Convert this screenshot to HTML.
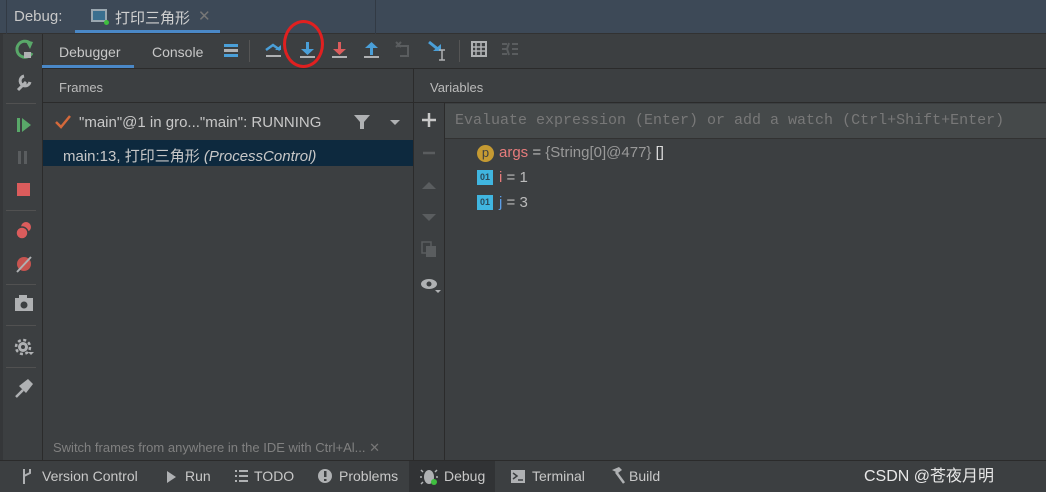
<!DOCTYPE html>
<html><head><meta charset="utf-8"><style>
*{margin:0;padding:0;box-sizing:border-box}
body{width:1046px;height:492px;background:#3c3f41;font-family:"Liberation Sans","Noto Sans CJK SC",sans-serif;color:#bbbbbb;position:relative;overflow:hidden;font-size:14px}
.a{position:absolute}
.mono{font-family:"Liberation Mono","DejaVu Sans Mono",monospace}
</style></head><body>
<div class="a" style="left:0;top:0;width:1046px;height:34px;background:#3d4957;border-bottom:1px solid #323232"></div>
<div class="a" style="left:6px;top:0;width:1px;height:34px;background:#323a44"></div>
<div class="a" style="left:375px;top:0;width:1px;height:34px;background:#323a44"></div>
<div class="a" style="left:14px;top:8px;font-size:15px;color:#c8c8c8">Debug:</div>
<div class="a" style="left:91px;top:9px;width:16px;height:13px;border:2px solid #9aa7b0;background:#3a6f8f"></div>
<div class="a" style="left:104px;top:20px;width:5px;height:5px;border-radius:50%;background:#3fbf3f"></div>
<div class="a" style="left:115px;top:7px;font-size:15px;color:#d0d0d0">打印三角形</div>
<div class="a" style="left:198px;top:7px;font-size:15px;color:#777">✕</div>
<div class="a" style="left:75px;top:30px;width:145px;height:3px;background:#4a88c7"></div>
<div class="a" style="left:42px;top:34px;width:1px;height:426px;background:#2b2b2b"></div>
<div class="a" style="left:0;top:34px;width:3px;height:426px;background:#353739"></div>
<div class="a" style="left:6px;top:103px;width:30px;height:1px;background:#515151"></div>
<div class="a" style="left:6px;top:210px;width:30px;height:1px;background:#515151"></div>
<div class="a" style="left:6px;top:284px;width:30px;height:1px;background:#515151"></div>
<div class="a" style="left:6px;top:325px;width:30px;height:1px;background:#515151"></div>
<div class="a" style="left:6px;top:367px;width:30px;height:1px;background:#515151"></div>
<svg class="a" style="left:0;top:34px" width="42" height="380">
<path d="M30 9 a8 8 0 1 0 2 10" fill="none" stroke="#59a869" stroke-width="3"/><path d="M25 6 l8 2 -3 7z" fill="#59a869"/><rect x="24" y="18" width="7" height="6" fill="#afb1b3"/>
<path d="M18 56 l8 -8 M24 42 a5 5 0 1 0 6 6" stroke="#afb1b3" stroke-width="3" fill="none"/>
<rect x="17" y="84" width="3" height="14" fill="#59a869"/><path d="M22 84 l9 7 -9 7z" fill="#59a869"/>
<rect x="18" y="117" width="3" height="13" fill="#5a5d5f"/><rect x="24" y="117" width="3" height="13" fill="#5a5d5f"/>
<rect x="17" y="149" width="13" height="13" fill="#db5c5c"/>
<circle cx="26" cy="193" r="5" fill="#db5c5c"/><circle cx="22" cy="199" r="6" fill="#db5c5c" stroke="#3c3f41" stroke-width="1.5"/>
<circle cx="24" cy="230" r="7" fill="#c75450"/><path d="M17 238 l14 -15" stroke="#afb1b3" stroke-width="2"/>
<rect x="15" y="264" width="18" height="13" fill="#afb1b3"/><rect x="19" y="261" width="8" height="4" fill="#afb1b3"/><circle cx="24" cy="271" r="3.5" fill="#3c3f41"/>
<circle cx="23" cy="313" r="5" fill="#afb1b3"/><circle cx="23" cy="313" r="7" fill="none" stroke="#afb1b3" stroke-width="2.5" stroke-dasharray="3 2.5"/><circle cx="23" cy="313" r="2" fill="#3c3f41"/><path d="M28 318 h6 l-3 3z" fill="#afb1b3"/>
<path d="M16 363 l7 -7" stroke="#afb1b3" stroke-width="2.5"/><path d="M19 352 l9 -7 5 5 -7 9z" fill="#afb1b3"/>
</svg>
<div class="a" style="left:43px;top:68px;width:1003px;height:1px;background:#2b2b2b"></div>
<div class="a" style="left:59px;top:44px;color:#c8c8c8">Debugger</div>
<div class="a" style="left:42px;top:65px;width:92px;height:3px;background:#4a88c7"></div>
<div class="a" style="left:152px;top:44px;color:#c8c8c8">Console</div>
<div class="a" style="left:249px;top:40px;width:1px;height:22px;background:#555"></div>
<div class="a" style="left:459px;top:40px;width:1px;height:22px;background:#555"></div>
<svg class="a" style="left:220px;top:38px" width="310" height="26">
<rect x="4" y="6" width="14" height="3" fill="#4a9fd8"/><rect x="4" y="11" width="14" height="3" fill="#afb1b3"/><rect x="4" y="16" width="14" height="3" fill="#4a9fd8"/>
<path d="M46 12 l7 -5 7 5" fill="none" stroke="#4a9fd8" stroke-width="2.5"/><path d="M55 12 l6 0 0 -5z" fill="#4a9fd8"/><rect x="46" y="17" width="15" height="2" fill="#afb1b3"/>
<rect x="86" y="4" width="3" height="9" fill="#4a9fd8"/><path d="M81 11 h13 l-6.5 6z" fill="#4a9fd8"/><rect x="80" y="18" width="15" height="2" fill="#afb1b3"/>
<rect x="118" y="4" width="3" height="9" fill="#db5c5c"/><path d="M113 11 h13 l-6.5 6z" fill="#db5c5c"/><rect x="112" y="18" width="15" height="2" fill="#afb1b3"/>
<rect x="150" y="9" width="3" height="8" fill="#4a9fd8"/><path d="M145 10 h13 l-6.5 -6z" fill="#4a9fd8"/><rect x="144" y="18" width="15" height="2" fill="#afb1b3"/>
<path d="M178 8 h10 v10 h-8" fill="none" stroke="#5a5d5f" stroke-width="2"/><path d="M176 4 l5 5 M181 4 l-5 5" stroke="#5a5d5f" stroke-width="2"/>
<path d="M209 4 l10 8" stroke="#4a9fd8" stroke-width="3"/><path d="M213 13 h8 v-7z" fill="#4a9fd8"/><path d="M222 12 v10 M219 12 h6 M219 22 h6" stroke="#afb1b3" stroke-width="1.5"/>
<rect x="252" y="4" width="14" height="14" fill="none" stroke="#afb1b3" stroke-width="2"/><path d="M252 9 h14 M252 13 h14 M256 4 v14 M261 4 v14" stroke="#afb1b3" stroke-width="1.5"/>
<path d="M282 6 h5 M282 11 h5 M282 16 h5 M292 6 h6 M292 11 h6 M292 16 h6 M289 5 l-2 6 2 6" stroke="#5a5d5f" stroke-width="2" fill="none"/>
</svg>
<div class="a" style="left:283px;top:20px;width:41px;height:48px;border:3px solid #e02020;border-radius:50%"></div>
<div class="a" style="left:43px;top:102px;width:1003px;height:1px;background:#2b2b2b"></div>
<div class="a" style="left:59px;top:80px;font-size:13px">Frames</div>
<div class="a" style="left:413px;top:69px;width:1px;height:391px;background:#2b2b2b"></div>
<div class="a" style="left:430px;top:80px;font-size:13px">Variables</div>
<svg class="a" style="left:54px;top:113px" width="20" height="18"><path d="M2 9 l5 5 9 -11" fill="none" stroke="#d4693b" stroke-width="2.5"/></svg>
<div class="a" style="left:79px;top:114px;font-size:15px;color:#c8c8c8">"main"@1 in gro..."main": RUNNING</div>
<svg class="a" style="left:353px;top:113px" width="50" height="18"><path d="M1 2 h16 l-6 7 v7 h-4 v-7z" fill="#afb1b3"/><path d="M37 7 h10 l-5 5z" fill="#afb1b3"/></svg>
<div class="a" style="left:43px;top:140px;width:370px;height:26px;background:#0d293e"></div>
<div class="a" style="left:63px;top:145px;font-size:15px;color:#c8c8c8">main:13, 打印三角形 <i>(ProcessControl)</i></div>
<div class="a" style="left:53px;top:440px;font-size:13px;color:#808080">Switch frames from anywhere in the IDE with Ctrl+Al... <span style="color:#777">✕</span></div>
<div class="a" style="left:444px;top:103px;width:1px;height:357px;background:#2b2b2b"></div>
<svg class="a" style="left:414px;top:103px" width="30" height="200">
<path d="M15 10 v14 M8 17 h14" stroke="#c8c8c8" stroke-width="2.5"/>
<path d="M9 50 h12" stroke="#5a5d5f" stroke-width="2.5"/>
<path d="M8 86 l7 -7 7 7z" fill="#5a5d5f"/><path d="M8 111 l7 7 7 -7z" fill="#5a5d5f"/>
<rect x="8" y="139" width="9" height="11" fill="none" stroke="#5a5d5f" stroke-width="1.5"/><rect x="12" y="143" width="10" height="11" fill="#5a5d5f"/>
<ellipse cx="15" cy="181" rx="8" ry="5" fill="#afb1b3"/><circle cx="15" cy="181" r="2.5" fill="#3c3f41"/><path d="M21 187 h6 l-3 3z" fill="#afb1b3"/>
</svg>
<div class="a" style="left:445px;top:104px;width:601px;height:35px;background:#45494a;border-bottom:1px solid #323232"></div>
<div class="a mono" style="left:455px;top:112px;font-size:15px;color:#787878;white-space:nowrap">Evaluate expression (Enter) or add a watch (Ctrl+Shift+Enter)</div>
<div class="a" style="left:477px;top:145px;width:17px;height:17px;border-radius:50%;background:#c59a32;color:#3c3f41;font-size:13px;text-align:center;line-height:16px">p</div>
<div class="a" style="left:499px;top:144px;font-size:15px"><span style="color:#e67c7c">args</span> = <span style="color:#999">{String[0]@477}</span> <span style="color:#ddd">[]</span></div>
<div class="a" style="left:477px;top:170px;width:16px;height:15px;background:#40b6e0;color:#2b4a5a;font-size:9px;text-align:center;line-height:15px;font-weight:bold">01</div>
<div class="a" style="left:499px;top:169px;font-size:15px"><span style="color:#e67c7c">i</span> = 1</div>
<div class="a" style="left:477px;top:195px;width:16px;height:15px;background:#40b6e0;color:#2b4a5a;font-size:9px;text-align:center;line-height:15px;font-weight:bold">01</div>
<div class="a" style="left:499px;top:194px;font-size:15px"><span style="color:#5c9ee6">j</span> = 3</div>
<div class="a" style="left:0;top:460px;width:1046px;height:32px;background:#3c3f41;border-top:1px solid #2b2b2b"></div>
<div class="a" style="left:409px;top:461px;width:86px;height:31px;background:#313335"></div>
<svg class="a" style="left:0;top:461px" width="700" height="31">
<path d="M24 8 v15 M24 15 l6 -3 v-4" stroke="#afb1b3" stroke-width="2" fill="none"/>
<path d="M167 10 l9 6 -9 6z" fill="#afb1b3"/>
<path d="M235 10 h2 M235 15 h2 M235 20 h2 M239 10 h9 M239 15 h9 M239 20 h9" stroke="#afb1b3" stroke-width="2"/>
<circle cx="325" cy="15" r="7" fill="#afb1b3"/><rect x="324" y="10" width="2.5" height="6" fill="#3c3f41"/><rect x="324" y="18" width="2.5" height="2" fill="#3c3f41"/>
<ellipse cx="429" cy="16" rx="5" ry="7" fill="#afb1b3"/><path d="M423 11 l-2 -2 M435 11 l2 -2 M422 16 h-2 M436 16 h2 M423 21 l-2 2" stroke="#afb1b3" stroke-width="1.5"/><circle cx="434" cy="21" r="3" fill="#3fbf3f"/>
<rect x="511" y="9" width="14" height="13" fill="#afb1b3"/><path d="M513 12 l4 3 -4 3 M518 19 h5" stroke="#3c3f41" stroke-width="1.5" fill="none"/>
<path d="M612 9 l7 -3 3 3 -4 3z" fill="#afb1b3"/><path d="M616 11 l8 11" stroke="#afb1b3" stroke-width="2.5"/>
</svg>
<div class="a" style="left:20px;top:468px;font-size:14px;color:#c8c8c8;white-space:nowrap">
<span style="position:absolute;left:22px">Version Control</span>
<span style="position:absolute;left:165px">Run</span>
<span style="position:absolute;left:234px">TODO</span>
<span style="position:absolute;left:319px">Problems</span>
<span style="position:absolute;left:424px">Debug</span>
<span style="position:absolute;left:512px">Terminal</span>
<span style="position:absolute;left:609px">Build</span>
</div>
<div class="a" style="left:864px;top:462px;font-size:16px;color:#e8e8e8">CSDN @苍夜月明</div>
</body></html>
